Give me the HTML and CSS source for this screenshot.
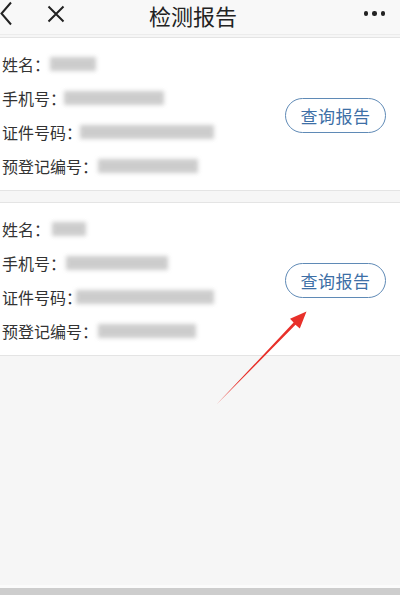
FILE: index.html
```html
<!DOCTYPE html>
<html lang="zh-CN">
<head>
  <meta charset="UTF-8" />
  <meta name="viewport" content="width=device-width, initial-scale=1.0"/>
  <title>检测报告</title>
  <link rel="stylesheet" href="styles.css">
</head>
<body>
  <div class="topbar">
    <svg class="icon back" width="14" height="26" viewBox="0 0 14 26">
      <polyline points="11,2.5 1.5,13.5 11,24.5" fill="none" stroke="#222" stroke-width="2"/>
    </svg>
    <svg class="icon close" width="18" height="18" viewBox="0 0 18 18">
      <path d="M1.5 1.5 L16.5 16.5 M16.5 1.5 L1.5 16.5" stroke="#222" stroke-width="2"/>
    </svg>
    <div class="title">检测报告</div>
    <div class="more"><span></span><span></span><span></span></div>
  </div>

  <div class="list">
    <div class="card">
      <div class="info">
        <div class="row">姓名：<span class="mask m-name"></span></div>
        <div class="row">手机号：<span class="mask m-phone"></span></div>
        <div class="row">证件号码：<span class="mask m-id"></span></div>
        <div class="row">预登记编号：<span class="mask m-reg"></span></div>
      </div>
      <a class="report-btn">查询报告</a>
    </div>

    <div class="card">
      <div class="info">
        <div class="row">姓名：<span class="mask m-name2"></span></div>
        <div class="row">手机号：<span class="mask m-phone2"></span></div>
        <div class="row">证件号码：<span class="mask m-id2"></span></div>
        <div class="row">预登记编号：<span class="mask m-reg2"></span></div>
      </div>
      <a class="report-btn">查询报告</a>
    </div>
  </div>

  <div class="bottom-bar"></div>

  <!-- red annotation arrow drawn over the page -->
  <svg class="arrow" width="400" height="595" viewBox="0 0 400 595">
    <polygon points="216,405 295.5,324.8 299.8,328.5 306.5,311.5 290,318.8 293.6,322.6" fill="#e8302a"/>
  </svg>
</body>
</html>
```

FILE: styles.css
```css
:root {
  --bg: #f6f6f6;
  --line: #e4e4e4;
  --text: #333333;
  --accent: #3d6fa6;
  --accent-border: #5f8ab6;
}
* { margin: 0; padding: 0; box-sizing: border-box; }
body {
  font-family: "Noto Sans CJK SC", "Noto Sans", sans-serif;
  background: var(--bg);
  color: var(--text);
  width: 400px;
  height: 595px;
  display: flex;
  flex-direction: column;
  overflow: hidden;
}
.topbar {
  height: 35px;
  display: flex;
  align-items: flex-start;
  background: #f8f8f8;
  border-bottom: 1px solid #ececec;
  flex-shrink: 0;
}
.topbar .back { margin-top: 0; }
.topbar .close { margin-left: 33px; margin-top: 4.5px; }
.topbar .title {
  margin-left: 84px;
  font-size: 22px;
  color: #222;
  line-height: normal;
  margin-top: -1px;
}
.topbar .more {
  margin-left: auto;
  margin-right: 15px;
  margin-top: 11px;
  display: flex;
  gap: 4px;
}
.topbar .more span {
  width: 4.5px;
  height: 4.5px;
  border-radius: 50%;
  background: #222;
}
.list {
  display: flex;
  flex-direction: column;
  gap: 11px;
  padding-top: 2px;
}
.card {
  background: #fff;
  border-top: 1px solid var(--line);
  border-bottom: 1px solid var(--line);
  display: flex;
  align-items: center;
  padding: 9px 14px 7px 2px;
}
.info {
  flex-grow: 1;
  display: flex;
  flex-direction: column;
}
.row {
  height: 34px;
  display: flex;
  align-items: center;
  font-size: 16px;
  white-space: nowrap;
}
.mask {
  display: inline-block;
  height: 14px;
  background: #c4c4c4;
  filter: blur(2px);
  opacity: 0.85;
}
.m-name { width: 46px; }
.m-phone { width: 100px; margin-left: -2px; }
.m-id { width: 134px; margin-left: -2px; }
.m-reg { width: 100px; }
.m-name2 { width: 34px; margin-left: 2px; }
.m-phone2 { width: 102px; }
.m-id2 { width: 138px; margin-left: -6px; }
.m-reg2 { width: 98px; }
.report-btn {
  width: 101px;
  height: 35px;
  border: 1.5px solid var(--accent-border);
  border-radius: 18px;
  color: var(--accent);
  font-size: 17px;
  display: flex;
  align-items: center;
  justify-content: center;
  letter-spacing: 0.5px;
  flex-shrink: 0;
}
.bottom-bar {
  margin-top: auto;
  height: 10px;
  border-top: 3px solid #fbfbfb;
  background: #cdcdcd;
}
.arrow {
  position: absolute;
  top: 0;
  left: 0;
  pointer-events: none;
}
```
